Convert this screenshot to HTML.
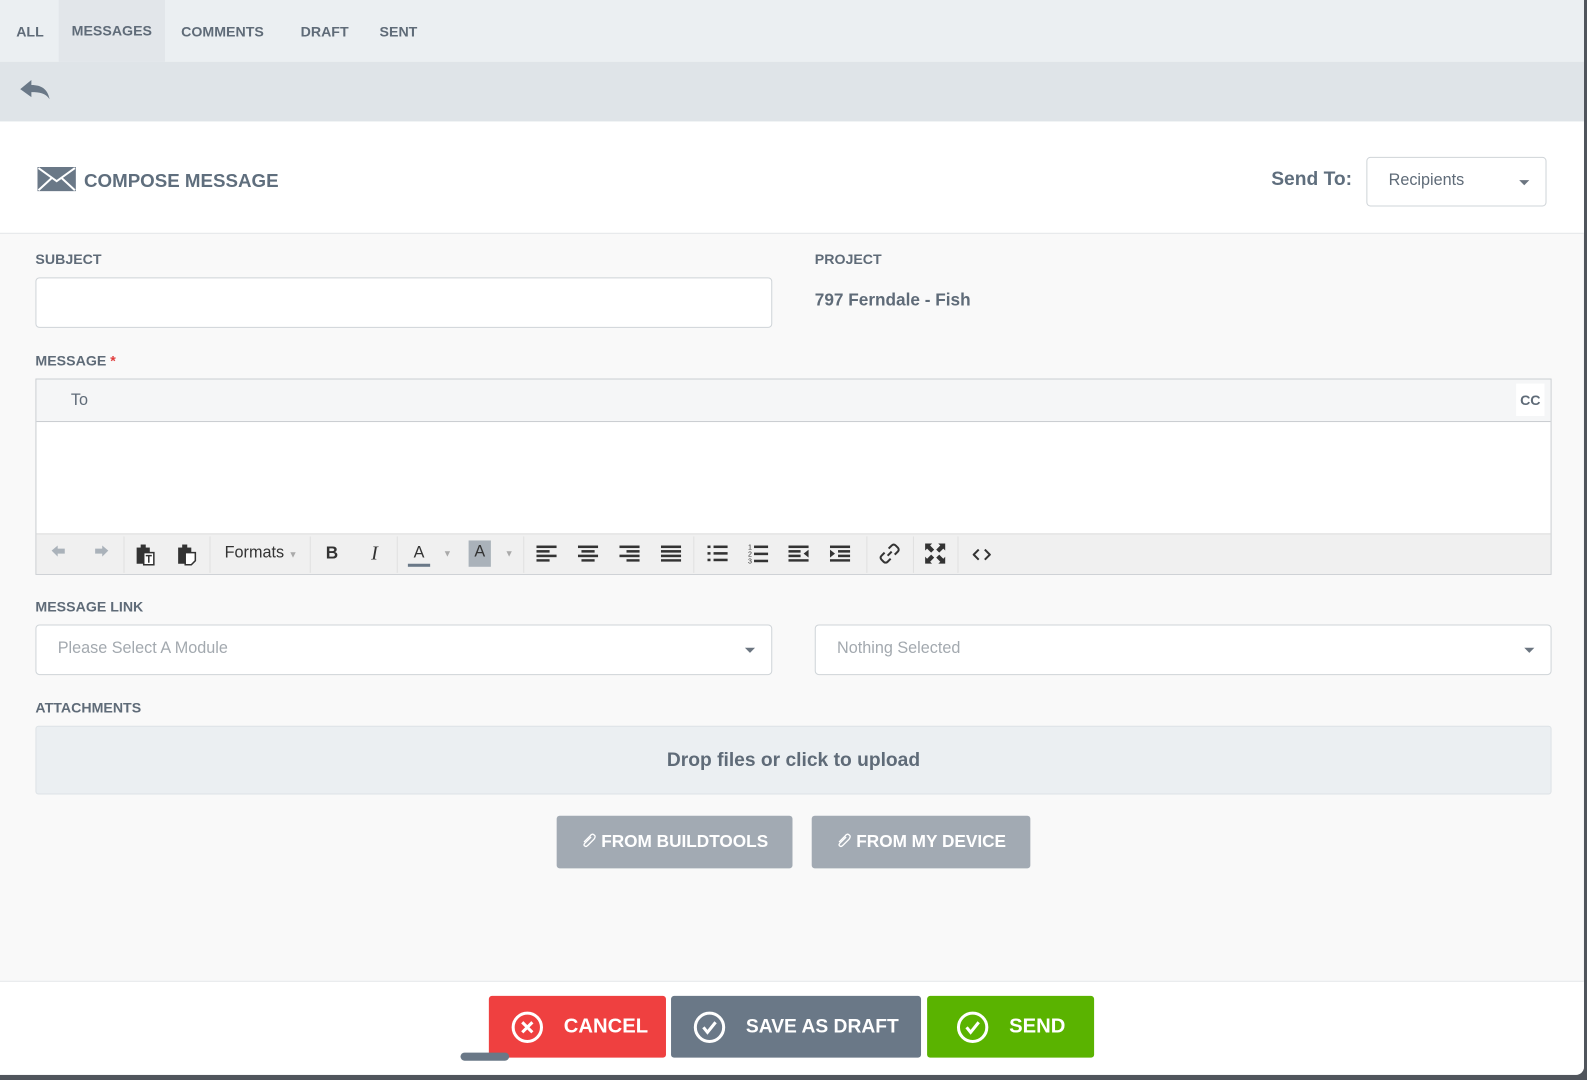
<!DOCTYPE html>
<html><head><meta charset="utf-8"><style>
*{box-sizing:border-box;margin:0;padding:0}
html,body{width:1587px;height:1080px;overflow:hidden;background:#50555c}
#w{position:absolute;left:0;top:0;width:1568px;height:1067px;transform:scale(1.01212);transform-origin:0 0;font-family:"Liberation Sans",sans-serif;color:#5f6b78;background:#50555c}
.a{position:absolute}
.panel{left:0;top:0;width:1565px;height:1062px;background:#f9f9f9;border-bottom-right-radius:8px;overflow:hidden}
.tabs{left:0;top:0;width:1565px;height:61px;background:#ebeff2}
.tab{position:absolute;top:0;height:61px;line-height:62px;font-size:14px;font-weight:bold;color:#5f6b78}
.bar{left:0;top:61px;width:1565px;height:59px;background:#dfe4e8}
.head{left:0;top:120px;width:1565px;height:111px;background:#fff;border-bottom:1px solid #e3e6e8}
.lbl{position:absolute;font-size:14px;font-weight:bold;color:#5f6b78}
.inp{position:absolute;background:#fff;border:1px solid #cfd4d8;border-radius:4px}
.ph{position:absolute;left:21px;top:14px;font-size:16px;color:#a3a9af}
.caret{position:absolute;width:0;height:0;border-left:5px solid transparent;border-right:5px solid transparent;border-top:5px solid #6b7580}
.tb{position:absolute;top:0;height:38px;line-height:38px;font-size:17px;color:#333;text-align:center}
.ic{position:absolute;top:9px}
.sep{position:absolute;top:2px;width:1px;height:36px;background:#e0e0e0}
.gbtn{position:absolute;top:806px;height:52px;background:#a2aab3;border-radius:3px;color:#fff;font-weight:bold;font-size:17px;line-height:52px;text-align:center}
.gbtn svg{vertical-align:-2px;margin-right:4px}
.fbtn{position:absolute;top:984px;height:61px;border-radius:3px;color:#fff;font-weight:bold;font-size:20px;line-height:61px}
.fbtn svg{position:absolute;top:15px}
</style></head><body><div id="w">
<div class="a panel">
 <div class="a tabs">
  <div class="tab" style="left:16px">ALL</div>
  <div class="tab" style="left:58px;width:105px;background:#e2e6ea;text-align:center;line-height:60px">MESSAGES</div>
  <div class="tab" style="left:179px">COMMENTS</div>
  <div class="tab" style="left:297px">DRAFT</div>
  <div class="tab" style="left:375px">SENT</div>
 </div>
 <div class="a bar"><svg class="a" style="left:19px;top:17px" width="32" height="22" viewBox="0 0 32 22"><path d="M1 10 L12 1 L12 6 C22 6 28 10 30 20 C26 14 20 13 12 13 L12 18 Z" fill="#6a7887"/></svg></div>
 <div class="a head">
  <svg class="a" style="left:37px;top:45px" width="38" height="24" viewBox="0 0 38 24"><rect x="0" y="0" width="38" height="24" fill="#6a7887"/><path d="M1 1 L19 14 L37 1 M1 23 L14 11 M37 23 L24 11" stroke="#fff" stroke-width="2" fill="none"/></svg>
  <div class="a" style="left:83px;top:48px;font-size:18.5px;font-weight:bold;color:#5f6e7d">COMPOSE MESSAGE</div>
  <div class="a" style="left:1256px;top:47px;font-size:19px;font-weight:bold;color:#5f6e7d">Send To:</div>
  <div class="inp" style="left:1350px;top:35px;width:178px;height:49px"><div class="a" style="left:21px;top:14px;font-size:16px;color:#5f6b78">Recipients</div><div class="caret" style="left:150px;top:22px"></div></div>
 </div>
 <div class="lbl" style="left:35px;top:248px">SUBJECT</div>
 <div class="inp" style="left:35px;top:274px;width:728px;height:50px"></div>
 <div class="lbl" style="left:805px;top:248px">PROJECT</div>
 <div class="a" style="left:805px;top:287px;font-size:17px;font-weight:bold;color:#5f6b78">797 Ferndale - Fish</div>
 <div class="lbl" style="left:35px;top:348px">MESSAGE <span style="color:#e03a3a">*</span></div>
 <div class="a" style="left:35px;top:374px;width:1498px;height:194px;border:1px solid #c9cdd1;background:#fff">
  <div class="a" style="left:0;top:0;width:1496px;height:42px;background:#f5f6f7;border-bottom:1px solid #c9cdd1">
   <div class="a" style="left:34px;top:12px;font-size:16px;color:#5f6b78">To</div>
   <div class="a" style="left:1462px;top:4px;width:28px;height:32px;background:#fff;font-size:14px;font-weight:bold;line-height:32px;text-align:center">CC</div>
  </div>
  <div class="a" style="left:0;top:152px;width:1496px;height:40px;background:#f0f0f0;border-top:1px solid #dcdcdc">
   <svg class="ic" style="left:14px" width="16" height="20" viewBox="0 0 16 20"><path d="M1 7 L7 2 L7 5 L14 5 L14 10 L7 10 L7 13 Z" fill="#aab2ba"/></svg>
   <svg class="ic" style="left:56px" width="16" height="20" viewBox="0 0 16 20"><path d="M15 7 L9 2 L9 5 L2 5 L2 10 L9 10 L9 13 Z" fill="#aab2ba"/></svg>
   <div class="sep" style="left:86px"></div>
   <svg class="ic" style="left:98px" width="20" height="22" viewBox="0 0 20 22"><rect x="1" y="4" width="13" height="16" fill="#333"/><rect x="5" y="1" width="5" height="4" fill="#333"/><rect x="8" y="9" width="10" height="12" fill="#fff" stroke="#333" stroke-width="1.5"/><path d="M10 12h6M13 12v7" stroke="#333" stroke-width="1.5"/></svg>
   <svg class="ic" style="left:139px" width="20" height="22" viewBox="0 0 20 22"><rect x="1" y="4" width="13" height="16" fill="#333"/><rect x="5" y="1" width="5" height="4" fill="#333"/><path d="M8 9h10v8l-4 4h-6z" fill="#fff" stroke="#333" stroke-width="1.5"/></svg>
   <div class="sep" style="left:171px"></div>
   <div class="tb" style="left:182px;width:80px;font-size:16px">Formats <span style="color:#aaa;font-size:9px">&#9660;</span></div>
   <div class="sep" style="left:270px"></div>
   <div class="tb" style="left:280px;width:24px;font-weight:bold">B</div>
   <div class="tb" style="left:322px;width:24px;font-style:italic;font-family:'Liberation Serif',serif;font-size:20px">I</div>
   <div class="sep" style="left:356px"></div>
   <div class="tb" style="left:366px;width:24px;font-size:16px">A</div><div class="a" style="left:367px;top:29px;width:22px;height:3px;background:#6a7887"></div>
   <div class="tb" style="left:400px;width:12px;color:#aaa;font-size:9px">&#9660;</div>
   <div class="tb" style="left:427px;width:22px;top:6px;height:26px;line-height:24px;background:#aab2ba;font-size:16px">A</div>
   <div class="tb" style="left:461px;width:12px;color:#aaa;font-size:9px">&#9660;</div>
   <div class="sep" style="left:481px"></div>
   <svg class="ic" style="left:494px;top:11px" width="20" height="16" viewBox="0 0 20 16" fill="#333"><rect y="0" width="20" height="2.5"/><rect y="4.5" width="13" height="2.5"/><rect y="9" width="20" height="2.5"/><rect y="13.5" width="13" height="2.5"/></svg>
   <svg class="ic" style="left:535px;top:11px" width="20" height="16" viewBox="0 0 20 16" fill="#333"><rect y="0" width="20" height="2.5"/><rect x="3.5" y="4.5" width="13" height="2.5"/><rect y="9" width="20" height="2.5"/><rect x="3.5" y="13.5" width="13" height="2.5"/></svg>
   <svg class="ic" style="left:576px;top:11px" width="20" height="16" viewBox="0 0 20 16" fill="#333"><rect y="0" width="20" height="2.5"/><rect x="7" y="4.5" width="13" height="2.5"/><rect y="9" width="20" height="2.5"/><rect x="7" y="13.5" width="13" height="2.5"/></svg>
   <svg class="ic" style="left:617px;top:11px" width="20" height="16" viewBox="0 0 20 16" fill="#333"><rect y="0" width="20" height="2.5"/><rect y="4.5" width="20" height="2.5"/><rect y="9" width="20" height="2.5"/><rect y="13.5" width="20" height="2.5"/></svg>
   <div class="sep" style="left:649px"></div>
   <svg class="ic" style="left:663px;top:11px" width="20" height="16" viewBox="0 0 20 16" fill="#333"><rect y="0" width="3" height="2.5"/><rect x="6" y="0" width="14" height="2.5"/><rect y="6.5" width="3" height="2.5"/><rect x="6" y="6.5" width="14" height="2.5"/><rect y="13" width="3" height="2.5"/><rect x="6" y="13" width="14" height="2.5"/></svg>
   <svg class="ic" style="left:703px;top:8px" width="20" height="22" viewBox="0 0 20 22" fill="#333"><text x="0" y="7" font-size="7" font-family="Liberation Sans">1</text><text x="0" y="14" font-size="7" font-family="Liberation Sans">2</text><text x="0" y="21" font-size="7" font-family="Liberation Sans">3</text><rect x="6" y="3" width="14" height="2.5"/><rect x="6" y="10" width="14" height="2.5"/><rect x="6" y="17" width="14" height="2.5"/></svg>
   <svg class="ic" style="left:743px;top:11px" width="20" height="16" viewBox="0 0 20 16" fill="#333"><rect y="0" width="20" height="2.5"/><rect y="4.5" width="12" height="2.5"/><rect y="9" width="12" height="2.5"/><rect y="13.5" width="20" height="2.5"/><path d="M20 4 L15 8 L20 12Z"/></svg>
   <svg class="ic" style="left:784px;top:11px" width="20" height="16" viewBox="0 0 20 16" fill="#333"><rect y="0" width="20" height="2.5"/><rect x="8" y="4.5" width="12" height="2.5"/><rect x="8" y="9" width="12" height="2.5"/><rect y="13.5" width="20" height="2.5"/><path d="M0 4 L5 8 L0 12Z"/></svg>
   <div class="sep" style="left:820px"></div>
   <svg class="ic" style="left:833px" width="20" height="20" viewBox="0 0 20 20"><path d="M8 12 L12 8 M9 5 L12 2 Q14 0 16 2 L18 4 Q20 6 18 8 L15 11 M11 15 L8 18 Q6 20 4 18 L2 16 Q0 14 2 12 L5 9" stroke="#333" stroke-width="2" fill="none"/></svg>
   <div class="sep" style="left:866px"></div>
   <svg class="ic" style="left:878px" width="20" height="20" viewBox="0 0 20 20" fill="#333"><path d="M0 0h7l-2 2 4 4-3 3-4-4-2 2zM20 0v7l-2-2-4 4-3-3 4-4-2-2zM0 20v-7l2 2 4-4 3 3-4 4 2 2zM20 20h-7l2-2-4-4 3-3 4 4 2-2z"/></svg>
   <div class="sep" style="left:910px"></div>
   <svg class="ic" style="left:925px;top:14px" width="18" height="12" viewBox="0 0 18 12"><path d="M6 1 L1 6 L6 11 M12 1 L17 6 L12 11" stroke="#333" stroke-width="2" fill="none"/></svg>
  </div>
 </div>
 <div class="lbl" style="left:35px;top:591px">MESSAGE LINK</div>
 <div class="inp" style="left:35px;top:617px;width:728px;height:50px"><div class="ph">Please Select A Module</div><div class="caret" style="left:700px;top:22px"></div></div>
 <div class="inp" style="left:805px;top:617px;width:728px;height:50px"><div class="ph">Nothing Selected</div><div class="caret" style="left:700px;top:22px"></div></div>
 <div class="lbl" style="left:35px;top:691px">ATTACHMENTS</div>
 <div class="a" style="left:35px;top:717px;width:1498px;height:68px;background:#ebeff2;border:1px solid #dde2e6;border-radius:3px;text-align:center;line-height:68px;font-size:19px;font-weight:bold;color:#5f6b78">Drop files or click to upload</div>
 <div class="gbtn" style="left:550px;width:233px"><svg width="16" height="16" viewBox="0 0 16 16"><path d="M10 4 L4 10 Q2 12 4 13 Q5 14 7 12 L13 6 Q15 3 13 2 Q11 0 9 3 L3 9" stroke="#fff" stroke-width="1.3" fill="none"/></svg>FROM BUILDTOOLS</div>
 <div class="gbtn" style="left:802px;width:216px"><svg width="16" height="16" viewBox="0 0 16 16"><path d="M10 4 L4 10 Q2 12 4 13 Q5 14 7 12 L13 6 Q15 3 13 2 Q11 0 9 3 L3 9" stroke="#fff" stroke-width="1.3" fill="none"/></svg>FROM MY DEVICE</div>
 <div class="a" style="left:0;top:969px;width:1565px;height:93px;background:#fff;border-top:1px solid #e3e6e8"></div>
 <div class="fbtn" style="left:483px;width:175px;background:#ef4040"><svg style="left:22px" width="32" height="32" viewBox="0 0 32 32"><circle cx="16" cy="16" r="14" stroke="#fff" stroke-width="3" fill="none"/><path d="M11 11 L21 21 M21 11 L11 21" stroke="#fff" stroke-width="3"/></svg><span style="position:absolute;left:74px">CANCEL</span></div>
 <div class="fbtn" style="left:663px;width:247px;background:#6a7887"><svg style="left:22px" width="32" height="32" viewBox="0 0 32 32"><circle cx="16" cy="16" r="14" stroke="#fff" stroke-width="3" fill="none"/><path d="M10 16 L14 21 L22 11" stroke="#fff" stroke-width="3" fill="none"/></svg><span style="position:absolute;left:74px;font-size:19px">SAVE AS DRAFT</span></div>
 <div class="fbtn" style="left:916px;width:165px;background:#5ab300"><svg style="left:29px" width="32" height="32" viewBox="0 0 32 32"><circle cx="16" cy="16" r="14" stroke="#fff" stroke-width="3" fill="none"/><path d="M10 16 L14 21 L22 11" stroke="#fff" stroke-width="3" fill="none"/></svg><span style="position:absolute;left:81px">SEND</span></div>
 <div class="a" style="left:455px;top:1040px;width:48px;height:8px;background:#6a7887;border-radius:4px"></div>
</div>
</div></body></html>
